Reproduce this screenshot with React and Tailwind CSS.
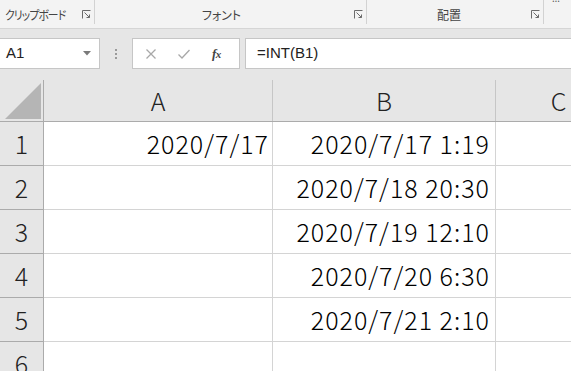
import React from "react";

const jp = "font-['Meiryo_UI','Noto_Sans_CJK_JP',sans-serif] [font-feature-settings:'palt']";
const cellFont = "font-['Noto_Sans_CJK_JP','Liberation_Sans',sans-serif] font-light text-[25px] tracking-[1px] text-black";

const rows = [
  { n: 1, a: "2020/7/17", b: "2020/7/17 1:19" },
  { n: 2, a: "", b: "2020/7/18 20:30" },
  { n: 3, a: "", b: "2020/7/19 12:10" },
  { n: 4, a: "", b: "2020/7/20 6:30" },
  { n: 5, a: "", b: "2020/7/21 2:10" },
  { n: 6, a: "", b: "" },
];

const Launcher = () => (
  <svg width="9" height="9" viewBox="0 0 9 9" className="shrink-0">
    <path d="M0.5 8.5V0.5H8.5" fill="none" stroke="#6b6b6b" strokeWidth="1" />
    <path d="M2.5 2.5L7.5 7.5M7.5 4.5V7.5H4.5" fill="none" stroke="#6b6b6b" strokeWidth="1" />
  </svg>
);

const RibbonGroup = ({ label, width, labelClass }) => (
  <div className={`flex items-end h-full border-r border-[#d2d2d2] pb-[3px] pr-[2px] ${width}`}>
    <div className={`flex-1 text-[12px] leading-none text-[#444] ${jp} ${labelClass}`}>{label}</div>
    <div className="pb-[2px] pr-[1px]">
      <Launcher />
    </div>
  </div>
);

const Ribbon = () => (
  <div className="flex h-[29px] bg-[#f3f3f3] border-b border-[#d5d5d5] pb-[4px]">
    <RibbonGroup
      label={<span className="inline-block origin-left scale-x-90 whitespace-nowrap">クリップボード</span>}
      width="w-[95px]"
      labelClass="pl-[5px] text-[11px] tracking-[-1px]"
    />
    <RibbonGroup label="フォント" width="w-[272px]" labelClass="text-center pr-[6px]" />
    <RibbonGroup label="配置" width="w-[177px]" labelClass="text-center" />
    <div className="flex-1 relative">
      <span className="absolute -top-[9px] left-[8px] text-[10px] text-[#555]">…</span>
    </div>
  </div>
);

const FormulaBar = () => (
  <div className="flex items-center h-[51px] bg-[#e6e6e6] pb-[2px]">
    <div className="flex items-center justify-between w-[100px] h-[31px] bg-white border border-l-0 border-[#c6c6c6] pl-[6px] pr-[8px]">
      <span className="font-['Liberation_Sans',sans-serif] text-[15px] text-[#222]">A1</span>
      <svg width="8" height="5" viewBox="0 0 8 5">
        <path d="M0 0H8L4 4.5Z" fill="#7a7a7a" />
      </svg>
    </div>
    <div className="flex flex-col gap-[2px] w-[32px] items-center">
      <span className="w-[2px] h-[2px] bg-[#9a9a9a]" />
      <span className="w-[2px] h-[2px] bg-[#9a9a9a]" />
      <span className="w-[2px] h-[2px] bg-[#9a9a9a]" />
    </div>
    <div className="flex items-center w-[108px] h-[31px] bg-white border border-[#c6c6c6]">
      <svg width="12" height="12" viewBox="0 0 12 12" className="ml-[12px]">
        <path d="M1.5 1.5L10.5 10.5M10.5 1.5L1.5 10.5" stroke="#a8a8a8" strokeWidth="1.3" />
      </svg>
      <svg width="14" height="12" viewBox="0 0 14 12" className="ml-[20px]">
        <path d="M1.5 6.5L5 10L12.5 2" fill="none" stroke="#a8a8a8" strokeWidth="1.3" />
      </svg>
      <span className="ml-[21px] font-['Liberation_Serif',serif] italic font-bold text-[13px] text-[#444] tracking-[-0.5px]">
        f<span className="text-[11px]">x</span>
      </span>
    </div>
    <div className="flex items-center flex-1 h-[31px] ml-[5px] bg-white border border-r-0 border-[#c6c6c6] pl-[11px]">
      <span className="font-['Liberation_Sans',sans-serif] text-[15px] text-[#222]">=INT(B1)</span>
    </div>
  </div>
);

const HeaderRow = () => (
  <div className="flex h-[42px] bg-[#e6e6e6] border-b border-[#ababab]">
    <div className="relative w-[44px] shrink-0 h-full border-r border-[#ababab]">
      <svg width="36" height="36" viewBox="0 0 36 36" className="absolute left-[5px] top-[3px]">
        <path d="M36 0V36H0Z" fill="#b5b5b5" />
      </svg>
    </div>
    {[
      ["A", "w-[229px]"],
      ["B", "w-[223px]"],
      ["C", "w-[126px]"],
    ].map(([c, w]) => (
      <div
        key={c}
        className={`${w} shrink-0 h-full flex items-center justify-center border-r border-[#c6c6c6] font-['Noto_Sans_CJK_JP',sans-serif] font-light text-[25px] text-[#222]`}
      >
        {c}
      </div>
    ))}
  </div>
);

const Row = ({ n, a, b }) => (
  <div className="flex h-[44px]">
    <div className="w-[44px] shrink-0 flex items-center justify-center bg-[#e6e6e6] border-r border-b border-[#ababab] font-['Noto_Sans_CJK_JP',sans-serif] font-light text-[25px] text-[#222]">
      {n}
    </div>
    <div className={`w-[229px] shrink-0 flex items-center justify-end pr-[3px] border-r border-b border-[#d4d4d4] ${cellFont}`}>
      {a}
    </div>
    <div className={`w-[223px] shrink-0 flex items-center justify-end pr-[5px] border-r border-b border-[#d4d4d4] ${cellFont}`}>
      {b}
    </div>
    <div className="w-[126px] shrink-0 border-r border-b border-[#d4d4d4]" />
  </div>
);

export default function App() {
  return (
    <div className="w-[571px] h-[371px] overflow-hidden bg-white">
      <Ribbon />
      <FormulaBar />
      <HeaderRow />
      {rows.map((r) => (
        <Row key={r.n} {...r} />
      ))}
    </div>
  );
}
